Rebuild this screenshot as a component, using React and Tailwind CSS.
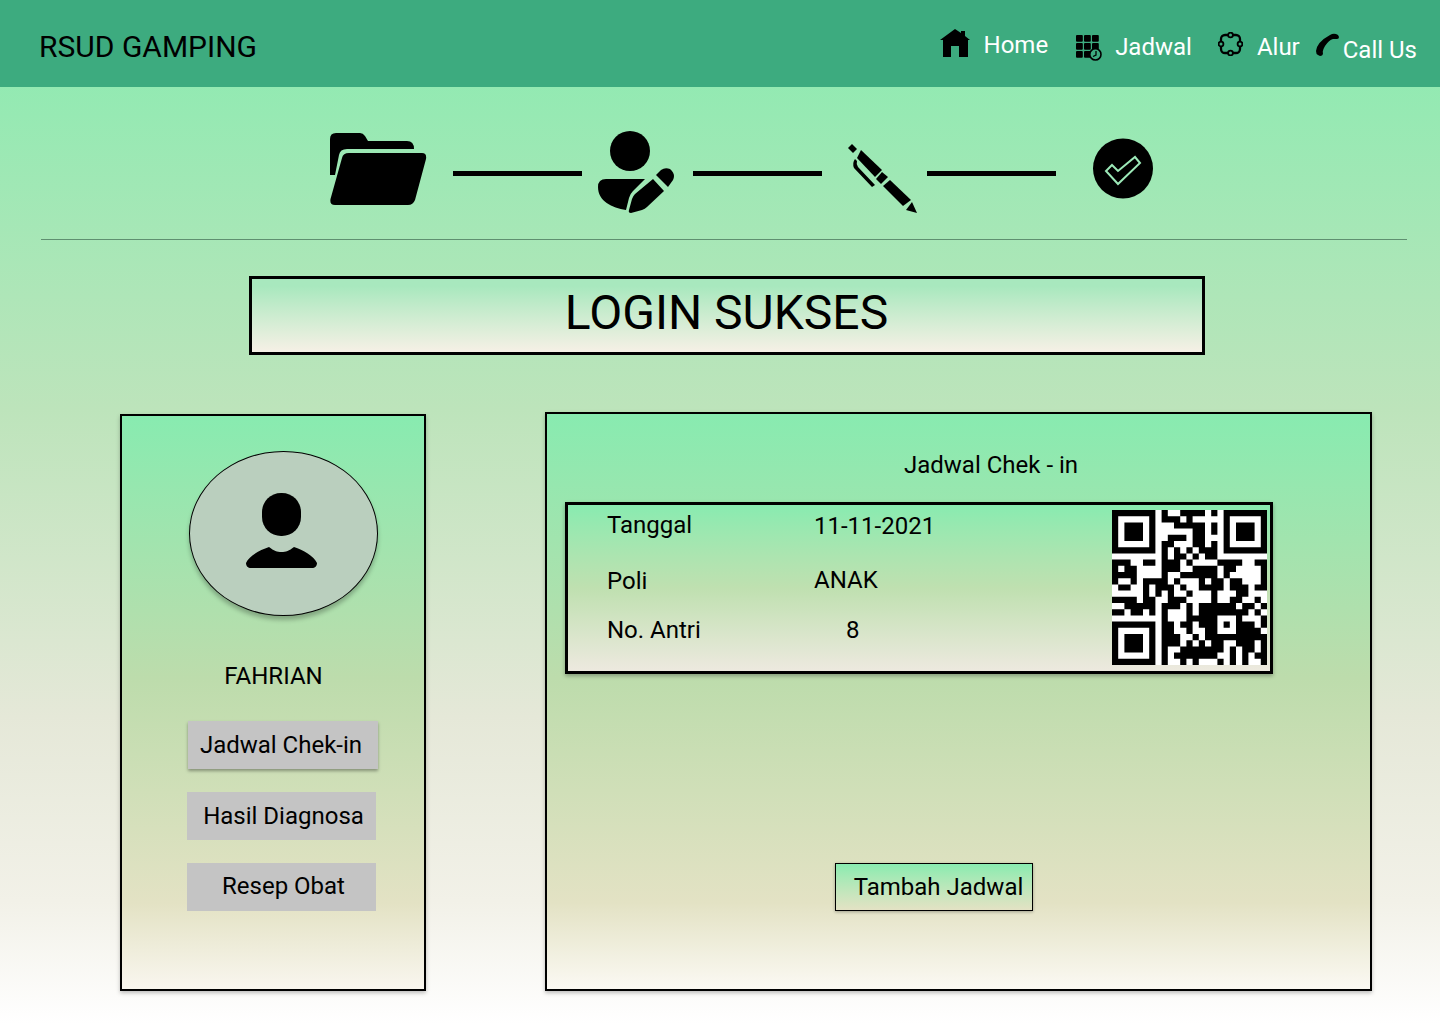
import React from "react";

const qrRows = [
  "1111111010011110101111111",
  "1000001011101000001000001",
  "1011101000111110101011101",
  "1011101000000110101011101",
  "1011101001110110001011101",
  "1000001011000110101000001",
  "1111111010101011101111111",
  "0000000010110101100000000",
  "1110011011101000011110011",
  "1011000011100111101100001",
  "1111000010011111101000001",
  "1001011110100010110110001",
  "0110010111010011110111011",
  "0000010101001000100011000",
  "1111011001110000100110010",
  "0011111011101011111101101",
  "1101101010001011111111010",
  "0000000010001111100010001",
  "1111111011011011101011101",
  "1000001011001001100011110",
  "1011101011100101111111111",
  "1011101011101010110011101",
  "1011101010011111110101101",
  "1000001010111111100101011",
  "1111111010010100010101001",
];

const qrPath = qrRows
  .map((row, y) =>
    row
      .split("")
      .map((cell, x) => (cell === "1" ? `M${x} ${y}h1v1h-1z` : ""))
      .join("")
  )
  .join("");

const QrCode = () => (
  <svg viewBox="0 0 25 25" className="w-[155px] h-[155px] bg-white shrink-0">
    <path d={qrPath} fill="#000" />
  </svg>
);

const HomeIcon = () => (
  <svg viewBox="0 0 30 28" className="w-[30px] h-[28px] mt-[29px]">
    <path d="M15 0 L21 4 V2 H25 V7 L30 11 H28 V28 H19 V17 H11 V28 H3 V11 H0 Z" fill="#000" />
  </svg>
);

const ScheduleIcon = () => (
  <svg viewBox="0 0 26 26" className="w-[26px] h-[26px] mt-[35px] ml-[28px]">
    {[0, 8, 16].map((y) =>
      [0, 8, 16].map((x) => <rect key={`${x}-${y}`} x={x} y={y} width="6.8" height="6.8" rx="1" fill="#000" />)
    )}
    <circle cx="19.4" cy="19.4" r="5.6" fill="#3dab7f" stroke="#000" strokeWidth="1.6" />
    <path d="M20 16 V20 L17 21.5" fill="none" stroke="#000" strokeWidth="1.3" />
  </svg>
);

const FlowIcon = () => (
  <svg viewBox="0 0 25 24" className="w-[25px] h-[24px] mt-[32px] ml-[26px]">
    <rect x="3" y="3" width="19" height="18" rx="4" fill="none" stroke="#000" strokeWidth="2.3" />
    {[[12.5, 3], [22, 12], [12.5, 21], [3, 12]].map(([cx, cy]) => (
      <circle key={`${cx}-${cy}`} cx={cx} cy={cy} r="2.4" fill="#3dab7f" stroke="#000" strokeWidth="1.8" />
    ))}
  </svg>
);

const PhoneIcon = () => (
  <svg viewBox="0 0 23 23" className="w-[23px] h-[23px] mt-[33px] ml-[16px]">
    <path
      d="M14 2 Q18 -0.5 22 2 L23 4 Q23 6 21 6 L17 6 Q13 7 9 13 Q6 18 7 20 Q7 23 4 23 L2 22 Q0 21 0 18 Q1 9 14 2Z"
      fill="#000"
    />
  </svg>
);

const FolderIcon = () => (
  <svg viewBox="0 0 97 72" className="w-[97px] h-[72px] mt-[2px] shrink-0">
    <path d="M0 42 V6 Q0 0 6 0 H30 Q33 0 35 3 L38 8 H77 Q84 8 84 16 H17 Q10 16 9 22 L5 42 Z" fill="#000" />
    <path d="M19 20 H92 Q97 20 96 26 L85 67 Q83 72 78 72 H5 Q-0.5 72 0.5 66 L12 25 Q13 20 19 20Z" fill="#000" />
  </svg>
);

const PersonEditIcon = () => (
  <svg viewBox="0 0 77 83" className="w-[77px] h-[83px] shrink-0">
    <circle cx="32" cy="20" r="20" fill="#000" />
    <path d="M8 48 H47 L35 60 Q32 63 31 67 L28 79 C14 77 0 70 0 56 Q0 48 8 48Z" fill="#000" />
    <path d="M55 48 L66 60 L49 76 Q47 78 44 79 L33 82 Q30 82 31 79 L34 68 Q35 65 37 63Z" fill="#000" />
    <path d="M58 44 L63 39 Q67 36 72 38 Q78 43 75 49 L70 56Z" fill="#000" />
  </svg>
);

const PenIcon = () => (
  <svg viewBox="0 0 69 70" className="w-[69px] h-[70px] mt-[13px] shrink-0">
    <path d="M0 4 L4 0 L9 5 L5 9Z" fill="#000" />
    <path d="M13 6 L34 26 L27 33 L9 14Z" fill="#000" />
    <path d="M7 15 Q4 19 6 24 L24 43 L27 41 L10 23 Q8 20 9 17Z" fill="#000" />
    <path d="M34 28 L40 33 L33 40 L28 35Z" fill="#000" />
    <path d="M42 36 L63 56 L55 62 L35 42Z" fill="#000" />
    <path d="M64 58 L69 69 L58 66Z" fill="#000" />
  </svg>
);

const CheckIcon = () => (
  <svg viewBox="0 0 60 61" className="w-[60px] h-[61px] mt-[7px] shrink-0">
    <circle cx="30" cy="30.5" r="30" fill="#000" />
    <path d="M19 27 L25 33 L42 19 L47 25 L25 46 L13 33Z" fill="none" stroke="#9ce9b8" strokeWidth="2" />
  </svg>
);

const StepLine = ({ className }) => <div className={`w-[129px] h-[5px] bg-black shrink-0 mt-10 ${className}`}></div>;

const AvatarIcon = () => (
  <svg viewBox="0 0 71 75" className="w-[71px] h-[75px]">
    <rect x="16" y="0" width="39" height="43" rx="19" fill="#000" />
    <path
      d="M23 54 C28 58 31 59 35.5 59 C40 59 43 58 48 54 C57 57 68 63 71 70 C71 73 69 75 66 75 L5 75 C2 75 0 73 0 70 C3 63 14 57 23 54Z"
      fill="#000"
    />
  </svg>
);

const App = () => {
  return (
    <div className="w-[1440px] h-[1024px] overflow-hidden font-[Roboto,sans-serif] text-black bg-[linear-gradient(180deg,#88ebb0_0%,#bde4bb_40%,#e5e8d8_70%,#f2f1e8_88%,#ffffff_100%)]">
      <header className="h-[87px] bg-[#3dab7f] flex items-start pl-[39px]">
        <h1 className="text-[30px] leading-[34px] mt-[30px]">RSUD GAMPING</h1>
        <nav className="ml-auto flex items-start text-white text-[24px] leading-[28px] pr-[23px]">
          <HomeIcon />
          <span className="ml-[14px] mt-[31px]">Home</span>
          <ScheduleIcon />
          <span className="ml-[13px] mt-[33px]">Jadwal</span>
          <FlowIcon />
          <span className="ml-[14px] mt-[33px]">Alur</span>
          <PhoneIcon />
          <span className="ml-[4px] mt-[36px]">Call Us</span>
        </nav>
      </header>

      <div className="flex items-start pl-[330px] pt-[44px] h-[127px]">
        <FolderIcon />
        <StepLine className="ml-[26px]" />
        <div className="ml-[16px]"><PersonEditIcon /></div>
        <StepLine className="ml-[18px]" />
        <div className="ml-[26px]"><PenIcon /></div>
        <StepLine className="ml-[10px]" />
        <div className="ml-[37px]"><CheckIcon /></div>
      </div>

      <div className="h-px ml-[41px] mr-[33px] mt-[25px] bg-[#5f8f70]"></div>

      <div className="w-[956px] h-[79px] ml-[249px] mt-[36px] border-[3px] border-black flex items-center justify-center bg-linear-to-b from-[#a8e8be] from-10% to-[#f6f0e6] text-[48px] leading-[56px] pr-[1px] pb-[6px]">
        LOGIN SUKSES
      </div>

      <div className="flex items-start pl-[120px] mt-[57px]">
        <aside className="w-[306px] h-[577px] mt-[2px] border-2 border-black shadow-[0_2px_4px_rgba(0,0,0,0.25)] bg-[linear-gradient(180deg,#88ebb0_0%,#bddcac_46%,#e3e2c4_85%,#f9f6ef_100%)] flex flex-col">
          <div className="w-[189px] h-[165px] ml-[67px] mt-[35px] rounded-[50%] border border-black bg-[#bacfbe] shadow-[0_4px_4px_rgba(0,0,0,0.25)] flex items-center justify-center pr-[4px] pb-[6px] shrink-0">
            <AvatarIcon />
          </div>
          <div className="text-[24px] leading-[28px] text-center mt-[46px] pl-[1px]">FAHRIAN</div>
          <button className="w-[190px] h-[48px] ml-[66px] mt-[31px] bg-[#c4c4c4] shadow-[0_2px_3px_rgba(0,0,0,0.35)] text-[24px] leading-[28px] pb-[1px] pr-[4px]">
            Jadwal Chek-in
          </button>
          <button className="w-[189px] h-[48px] ml-[65px] mt-[23px] bg-[#c4c4c4] text-[24px] leading-[28px] pl-[4px]">
            Hasil Diagnosa
          </button>
          <button className="w-[189px] h-[48px] ml-[65px] mt-[23px] bg-[#c4c4c4] text-[24px] leading-[28px] pb-[2px] pl-[4px]">
            Resep Obat
          </button>
        </aside>

        <main className="w-[827px] h-[579px] ml-[119px] border-2 border-black shadow-[0_2px_4px_rgba(0,0,0,0.25)] bg-[linear-gradient(180deg,#88ebb0_0%,#bddcac_46%,#e3e2c4_85%,#fbf9f3_100%)] flex flex-col">
          <div className="text-[24px] leading-[28px] mt-[37px] pl-[357px]">Jadwal Chek - in</div>
          <div className="w-[708px] h-[172px] ml-[18px] mt-[23px] border-[3px] border-black shadow-[0_2px_4px_rgba(0,0,0,0.3)] bg-linear-to-b from-[#88ebb0] via-[#bfe0b0] to-[#ede9df] flex text-[24px] leading-[28px]">
            <div className="flex-1 pl-[39px] pt-[6px]">
              <div className="flex h-[28px]"><span className="w-[207px]">Tanggal</span><span className="mt-[1px]">11-11-2021</span></div>
              <div className="flex h-[28px] mt-[27px]"><span className="w-[207px] mt-[1px]">Poli</span><span>ANAK</span></div>
              <div className="flex h-[28px] mt-[22px]"><span className="w-[239px]">No. Antri</span><span>8</span></div>
            </div>
            <div className="pt-[5px] pr-[3px]"><QrCode /></div>
          </div>
          <button className="w-[198px] h-[48px] ml-[288px] mt-[189px] border border-black shadow-[0_1px_3px_rgba(0,0,0,0.3)] bg-linear-to-b from-[#88ebb0] to-[#e3e2c4] text-[24px] leading-[28px] pl-[9px]">
            Tambah Jadwal
          </button>
        </main>
      </div>
    </div>
  );
};

export default App;
